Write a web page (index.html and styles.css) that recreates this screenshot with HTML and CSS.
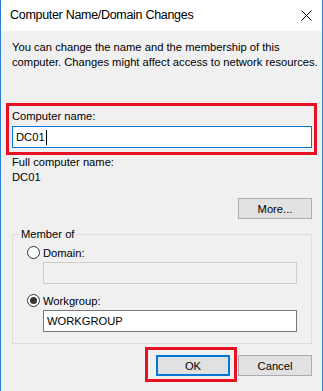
FILE: index.html
```html
<!DOCTYPE html>
<html lang="en">
<head>
    <meta charset="UTF-8">
    <title>Computer Name/Domain Changes</title>
    <link rel="stylesheet" href="styles.css">
</head>
<body>
    <div class="window">
        <div class="titlebar">
            <span class="title">Computer Name/Domain Changes</span>
            <svg class="close" width="11" height="11" viewBox="0 0 11 11">
                <path d="M0.5 0.5 L10.5 10.5 M10.5 0.5 L0.5 10.5" stroke="#000" stroke-width="1" fill="none"/>
            </svg>
        </div>

        <div class="content">
            <p class="intro">You can change the name and the membership of this<br>computer. Changes might affect access to network resources.</p>

            <div class="mark name-mark">
                <label class="label">Computer name:</label>
                <div class="field focused">DC01<span class="caret"></span></div>
            </div>

            <div class="full-name">
                <div>Full computer name:</div>
                <div>DC01</div>
            </div>

            <div class="more-row">
                <button class="btn">More...</button>
            </div>

            <fieldset class="group">
                <legend>Member of</legend>
                <div class="radio-row">
                    <span class="radio"></span>
                    <span>Domain:</span>
                </div>
                <div class="field disabled sub"></div>
                <div class="radio-row second">
                    <span class="radio checked"></span>
                    <span>Workgroup:</span>
                </div>
                <div class="field sub">WORKGROUP</div>
            </fieldset>

            <div class="actions">
                <div class="mark ok-mark">
                    <button class="btn default">OK</button>
                </div>
                <button class="btn cancel">Cancel</button>
            </div>
        </div>
    </div>
</body>
</html>
```

FILE: styles.css
```css
body {
    margin: 0;
    font-family: 'Liberation Sans', Arial, sans-serif;
    font-size: 11.2px;
    color: #000;
}
.window {
    width: 323px;
    height: 391px;
    box-sizing: border-box;
    border-left: 1px solid #2b7fd4;
    border-right: 1px solid #2b7fd4;
    background: #f0f0f0;
}
.titlebar {
    height: 31px;
    background: #fff;
    display: flex;
    align-items: center;
    justify-content: space-between;
    padding: 0 10px 0 9px;
}
.title {
    font-size: 12.5px;
    letter-spacing: -0.3px;
    padding-bottom: 1px;
}
.close {
    margin-bottom: 1px;
}
.content {
    padding: 9px 5px 0 5px;
}
.intro {
    margin: 0 0 33px 6px;
    line-height: 15px;
    white-space: nowrap;
}
.mark {
    border: 3px solid #e81123;
}
.name-mark {
    padding: 3px 2px 4px 3px;
}
.label {
    display: block;
    line-height: 15px;
    margin-bottom: 2px;
}
.field {
    height: 22px;
    box-sizing: border-box;
    border: 1px solid #7a7a7a;
    background: #fff;
    padding: 0 3px;
    line-height: 20px;
    display: flex;
    align-items: center;
}
.field.focused {
    border-color: #0078d7;
}
.caret {
    display: inline-block;
    width: 1px;
    height: 15px;
    background: #000;
    margin-left: 1px;
}
.field.disabled {
    border-color: #cccccc;
    background: #f0f0f0;
}
.full-name {
    padding-left: 6px;
    line-height: 15px;
}
.more-row {
    display: flex;
    justify-content: flex-end;
    padding: 13px 5px 0 0;
}
.btn {
    width: 74px;
    height: 21px;
    box-sizing: border-box;
    border: 1px solid #adadad;
    background: #e1e1e1;
    font-family: inherit;
    font-size: 11.2px;
    color: #000;
    padding: 0;
}
.btn.default {
    border: 2px solid #0078d7;
}
.group {
    margin: 8px 5px 0 6px;
    border: 1px solid #dcdcdc;
    padding: 4px 14px 11px 14px;
}
.group legend {
    padding: 0 2px;
    margin-left: -8px;
    line-height: 15px;
}
.radio-row {
    display: flex;
    align-items: center;
    gap: 3px;
    height: 15px;
    margin-top: -1px;
}
.radio-row.second {
    margin-top: 9px;
}
.radio {
    width: 13px;
    height: 13px;
    box-sizing: border-box;
    border: 1px solid #333;
    border-radius: 50%;
    background: #fff;
    display: flex;
    align-items: center;
    justify-content: center;
}
.radio.checked::after {
    content: "";
    width: 7px;
    height: 7px;
    border-radius: 50%;
    background: #333;
}
.sub {
    margin: 2px 0 0 16px;
}
.actions {
    display: flex;
    justify-content: flex-end;
    align-items: flex-end;
    padding: 3px 5px 0 0;
}
.ok-mark {
    padding: 5px 4px 3px 8px;
    margin-right: 1px;
}
.cancel {
    margin-bottom: 6px;
}
```
